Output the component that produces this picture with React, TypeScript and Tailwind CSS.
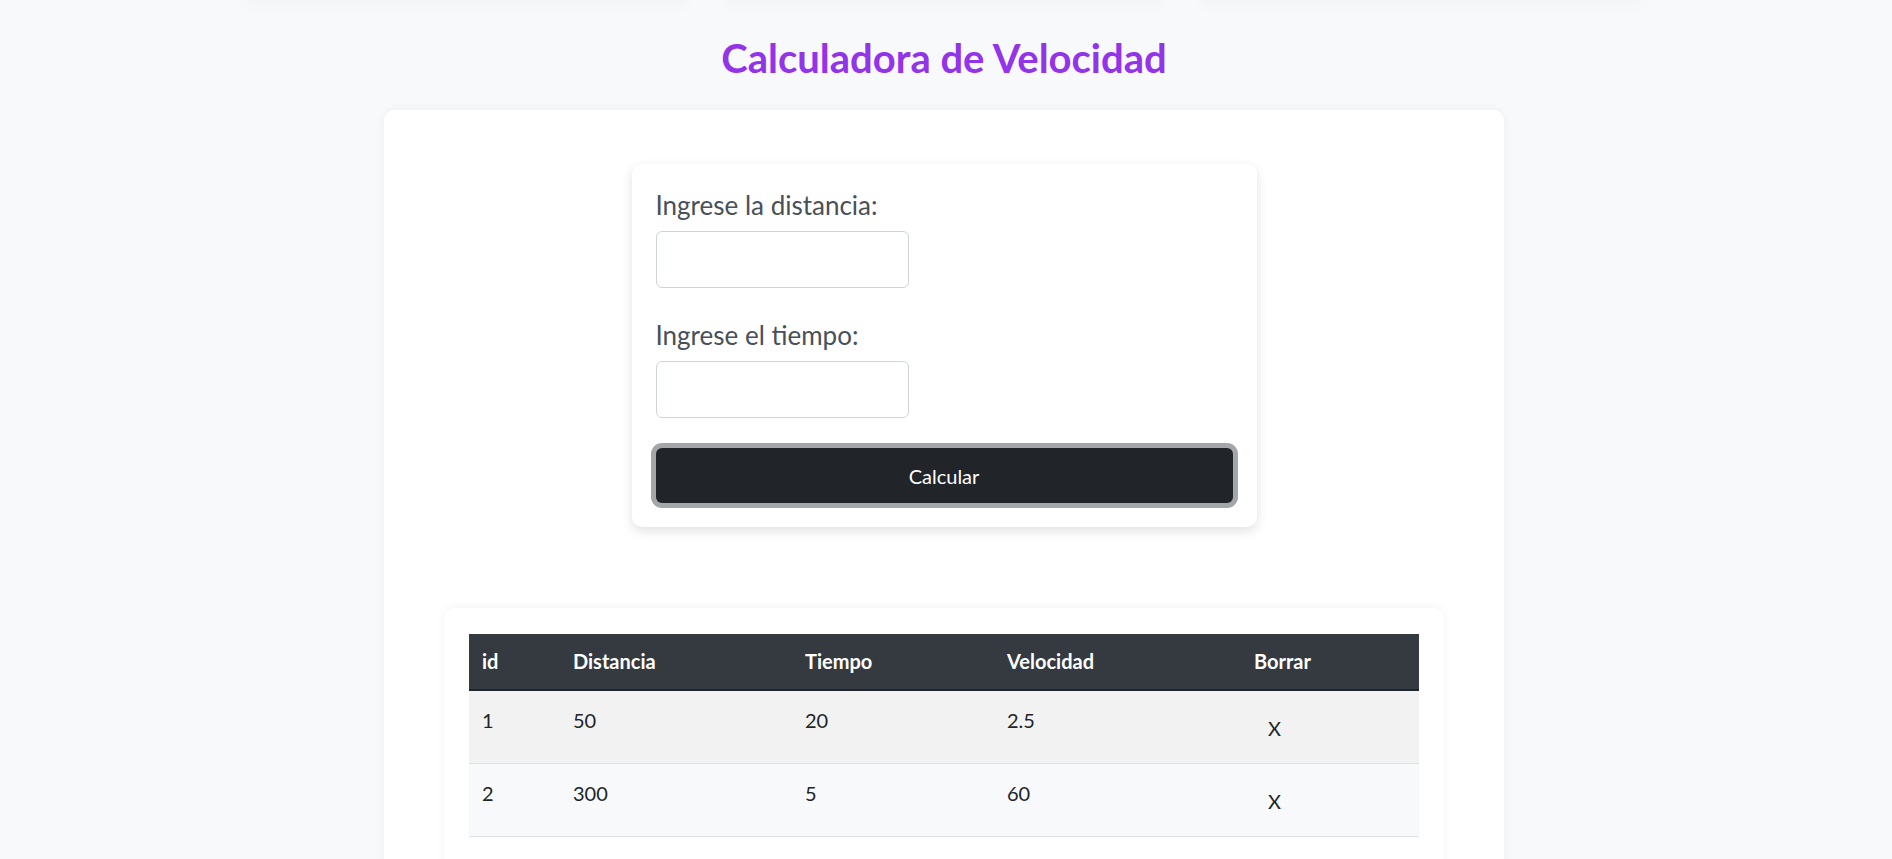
import React from "react";

type Registro = {
  id: number;
  distancia: number;
  tiempo: number;
  velocidad: number;
};

const registros: Registro[] = [
  { id: 1, distancia: 50, tiempo: 20, velocidad: 2.5 },
  { id: 2, distancia: 300, tiempo: 5, velocidad: 60 },
];

export default function App() {
  return (
    <div className="min-h-screen bg-[#f8f9fa] pr-1 font-['Lato','Open_Sans',sans-serif] text-[#212529]">
      {/* sombras de la barra que queda arriba */}
      <div className="flex h-0 justify-center gap-[28px]">
        <div className="-mt-10 h-10 w-[450px] rounded-[24px] bg-[#f8f9fa] shadow-[0_8px_18px_rgba(0,0,0,0.025)]" />
        <div className="-mt-10 h-10 w-[450px] rounded-[24px] bg-[#f8f9fa] shadow-[0_8px_18px_rgba(0,0,0,0.025)]" />
        <div className="-mt-10 h-10 w-[450px] rounded-[24px] bg-[#f8f9fa] shadow-[0_8px_18px_rgba(0,0,0,0.025)]" />
      </div>

      <h1 className="pt-[34px] text-center text-[40px] font-bold leading-[1.2] text-[#9333ea]">
        Calculadora de Velocidad
      </h1>

      <div className="mx-auto mt-[28px] w-[1120px] rounded-[10px] bg-white pb-10 pt-[54px] shadow-[0_0_10px_rgba(0,0,0,0.05)]">
        {/* formulario */}
        <div className="mx-auto w-[625px] rounded-[10px] bg-white p-6 shadow-[0_4px_12px_rgba(0,0,0,0.12)]">
          <label className="mb-2 block text-[26px] leading-[35px] text-[#495057]">
            Ingrese la distancia:
          </label>
          <input
            type="text"
            className="block h-[57px] w-[253px] rounded-[6px] border border-[#ced4da] bg-white px-3 outline-none"
          />

          <label className="mb-2 mt-[30px] block text-[26px] leading-[35px] text-[#495057]">
            Ingrese el tiempo:
          </label>
          <input
            type="text"
            className="block h-[57px] w-[253px] rounded-[6px] border border-[#ced4da] bg-white px-3 outline-none"
          />

          <button className="mt-[30px] block h-[55px] w-full rounded-[6px] bg-[#212529] text-[20px] text-white ring-[5px] ring-[#a4a6a8]">
            Calcular
          </button>
        </div>

        {/* tabla */}
        <div className="mx-auto mt-[81px] w-[1000px] rounded-[10px] bg-white px-[25px] pb-10 pt-[26px] shadow-[0_0_10px_rgba(0,0,0,0.06)]">
          <table className="w-full table-fixed border-collapse text-left text-[20px]">
            <thead>
              <tr className="border-b-2 border-[#212529] bg-[#343a40] text-white">
                <th className="w-[91px] px-[13px] py-[12px] font-bold leading-[31px]">id</th>
                <th className="w-[232px] px-[13px] py-[12px] font-bold leading-[31px]">Distancia</th>
                <th className="w-[202px] px-[13px] py-[12px] font-bold leading-[31px]">Tiempo</th>
                <th className="w-[247px] px-[13px] py-[12px] font-bold leading-[31px]">Velocidad</th>
                <th className="px-[13px] py-[12px] font-bold leading-[31px]">Borrar</th>
              </tr>
            </thead>
            <tbody>
              {registros.map((r, i) => (
                <tr
                  key={r.id}
                  className={
                    i % 2 === 0
                      ? "border-b border-[#dee2e6] bg-[#f2f2f2] leading-[30px]"
                      : "border-b border-[#dee2e6] bg-[#f8f9fa] leading-[30px]"
                  }
                >
                  <td className="h-[73px] px-[13px] pt-[14px] align-top">{r.id}</td>
                  <td className="px-[13px] pt-[14px] align-top">{r.distancia}</td>
                  <td className="px-[13px] pt-[14px] align-top">{r.tiempo}</td>
                  <td className="px-[13px] pt-[14px] align-top">{r.velocidad}</td>
                  <td className="px-[13px] pt-[22px] align-top">
                    <button className="px-[14px] leading-[30px]">X</button>
                  </td>
                </tr>
              ))}
            </tbody>
          </table>
        </div>
      </div>
    </div>
  );
}
